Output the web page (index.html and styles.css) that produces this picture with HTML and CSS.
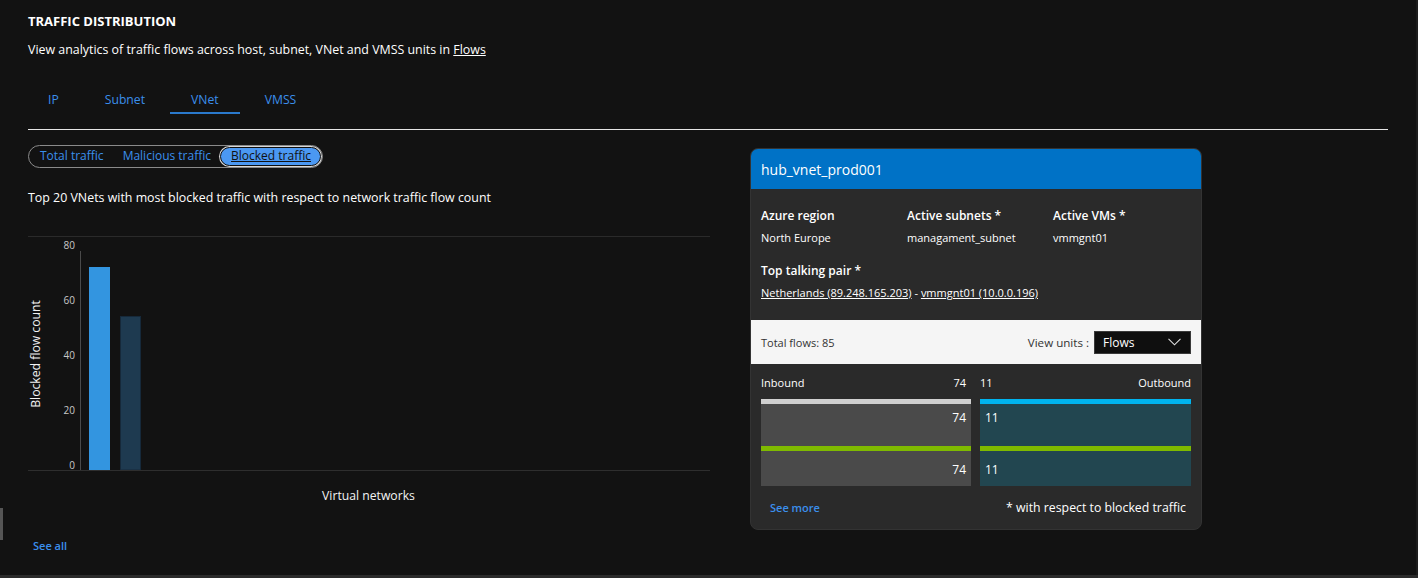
FILE: index.html
```html
<!DOCTYPE html>
<html lang="en">
<head>
<meta charset="utf-8">
<title>Traffic distribution</title>
<link rel="stylesheet" href="styles.css">
</head>
<body>
<div class="page">
  <h2 class="title">TRAFFIC DISTRIBUTION</h2>
  <p class="desc">View analytics of traffic flows across host, subnet, VNet and VMSS units in <a class="plain-link" href="#">Flows</a></p>
  <nav class="tabs">
    <span class="tab">IP</span>
    <span class="tab">Subnet</span>
    <span class="tab active">VNet</span>
    <span class="tab">VMSS</span>
  </nav>
  <div class="sep"></div>
  <div class="content">
    <section class="left">
      <div class="pills">
        <span class="pill">Total traffic</span>
        <span class="pill">Malicious traffic</span>
        <span class="pill selected">Blocked traffic</span>
      </div>
      <p class="chart-title">Top 20 VNets with most blocked traffic with respect to network traffic flow count</p>
      <svg class="chart" width="682" height="290" viewBox="0 0 682 290">
        <line x1="0" y1="10.5" x2="682" y2="10.5" stroke="#2a2a2a" stroke-width="1"/>
        <line x1="52.5" y1="25" x2="52.5" y2="244" stroke="#4a4a4a" stroke-width="1"/>
        <g class="ticks" text-anchor="end" dominant-baseline="central">
          <text x="47" y="18.5">80</text>
          <text x="47" y="73.5">60</text>
          <text x="47" y="128.5">40</text>
          <text x="47" y="183.5">20</text>
          <text x="47" y="238.5">0</text>
        </g>
        <rect x="61" y="41" width="21" height="203" fill="#3395e0"/>
        <rect x="92.5" y="90.5" width="20" height="153.5" fill="#1e3a50" stroke="#16293a" stroke-width="1"/>
        <line x1="0" y1="244.5" x2="682" y2="244.5" stroke="#2e2e2e" stroke-width="1"/>
        <text class="axis-title" transform="translate(7,128) rotate(-90)" text-anchor="middle" dominant-baseline="central">Blocked flow count</text>
        <text class="axis-title" x="340.5" y="269" text-anchor="middle" dominant-baseline="central">Virtual networks</text>
      </svg>
      <a class="see-all" href="#">See all</a>
    </section>
    <aside class="card">
      <header class="card-head">hub_vnet_prod001</header>
      <div class="card-info">
        <div class="info-grid">
          <div class="info-item"><div class="info-label">Azure region</div><div class="info-value">North Europe</div></div>
          <div class="info-item"><div class="info-label">Active subnets *</div><div class="info-value">managament_subnet</div></div>
          <div class="info-item"><div class="info-label">Active VMs *</div><div class="info-value">vmmgnt01</div></div>
        </div>
        <div class="info-label pair-label">Top talking pair *</div>
        <div class="info-value"><a class="plain-link" href="#">Netherlands (89.248.165.203)</a> - <a class="plain-link" href="#">vmmgnt01 (10.0.0.196)</a></div>
      </div>
      <div class="band">
        <span>Total flows: 85</span>
        <div class="units">
          <span>View units :</span>
          <div class="select">
            <span>Flows</span>
            <svg width="13" height="8" viewBox="0 0 13 8"><path d="M0.5 0.8 L6.5 6.8 L12.5 0.8" fill="none" stroke="#e0e0e0" stroke-width="1.1"/></svg>
          </div>
        </div>
      </div>
      <div class="flows">
        <div class="flow-col inbound">
          <div class="flow-head"><span>Inbound</span><span>74</span></div>
          <div class="stripe top"></div>
          <div class="block first">74</div>
          <div class="stripe green"></div>
          <div class="block second">74</div>
        </div>
        <div class="flow-col outbound">
          <div class="flow-head"><span>11</span><span>Outbound</span></div>
          <div class="stripe top"></div>
          <div class="block first">11</div>
          <div class="stripe green"></div>
          <div class="block second">11</div>
        </div>
      </div>
      <footer class="card-foot">
        <a class="see-more" href="#">See more</a>
        <span>* with respect to blocked traffic</span>
      </footer>
    </aside>
  </div>
</div>
<div class="scroll-thumb"></div>
<div class="bottom-bar"></div>
</body>
</html>
```

FILE: styles.css
```css
* { box-sizing: border-box; }

html, body {
  margin: 0;
  height: 578px;
  overflow: hidden;
}

body {
  background: #121212;
  color: #ffffff;
  font-family: "Open Sans", "Noto Sans", "Liberation Sans", sans-serif;
  font-size: 12px;
  position: relative;
}

.page {
  height: 575px;
  padding: 0 28px;
  border-right: 2px solid #1c1c1c;
}

.title {
  margin: 0;
  padding-top: 11px;
  font-size: 13px;
  font-weight: 700;
  line-height: 20px;
  letter-spacing: 0;
}

.desc {
  margin: 10px 0 0;
  font-size: 12.4px;
  line-height: 18px;
}

.plain-link {
  color: #ffffff;
  text-decoration: underline;
}

.tabs {
  display: flex;
  gap: 4px;
  margin-top: 32px;
}

.tab {
  padding: 0 21px;
  color: #3b8fec;
  font-size: 12.2px;
  line-height: 18px;
  height: 23px;
  border-bottom: 2px solid transparent;
}

.tab:first-child {
  padding-left: 20px;
}

.tab.active {
  border-bottom-color: #2a79cc;
}

.sep {
  margin-top: 15px;
  height: 1px;
  background: #e6e6e6;
}

.content {
  display: flex;
  align-items: flex-start;
  gap: 40px;
}

.left {
  width: 682px;
  flex: none;
}

.pills {
  margin-top: 15px;
  display: inline-flex;
  align-items: center;
  height: 23px;
  padding: 0 1px;
  border: 1px solid #8a8a8a;
  border-radius: 12px;
}

.pill {
  padding: 0 9px 0 10px;
  height: 19px;
  line-height: 18px;
  font-size: 12px;
  color: #3b8fec;
  border-radius: 10px;
}

.pill.selected {
  background: #4b98f2;
  color: #111111;
  text-decoration: underline;
  border: 1px solid #0e0e0e;
  box-shadow: 0 0 0 1px #d8d8d8;
  line-height: 16px;
}

.chart-title {
  margin: 21px 0 0;
  line-height: 18px;
  font-size: 12.4px;
}

.chart {
  display: block;
  margin-top: 19px;
}

.chart .ticks text {
  font-size: 10px;
  fill: #c8c8c8;
}

.chart .axis-title {
  font-size: 12.2px;
  fill: #f2f2f2;
}

.see-all {
  display: inline-block;
  margin: 22px 0 0 5px;
  color: #3b8fec;
  font-weight: 600;
  font-size: 11px;
  line-height: 16px;
  text-decoration: none;
}

.card {
  margin-top: 18px;
  width: 452px;
  flex: none;
  background: #2a2a2a;
  border: 1px solid #333333;
  border-radius: 8px;
  overflow: hidden;
}

.card-head {
  height: 40px;
  background: #0072c6;
  padding: 0 10px;
  display: flex;
  align-items: center;
  font-size: 14px;
}

.card-info {
  padding: 18px 10px 18px;
}

.info-grid {
  display: grid;
  grid-template-columns: 146px 146px 146px;
}

.info-label {
  font-weight: 600;
  font-size: 12px;
  line-height: 18px;
}

.info-value {
  margin-top: 4px;
  font-size: 11px;
  line-height: 18px;
}

.pair-label {
  margin-top: 15px;
}

.band {
  height: 44px;
  background: #f5f5f5;
  color: #333333;
  display: flex;
  align-items: center;
  justify-content: space-between;
  padding: 0 10px 0 10px;
  font-size: 11px;
}

.units {
  display: flex;
  align-items: center;
  gap: 5px;
}

.units > span {
  font-size: 11.6px;
}

.select {
  width: 97px;
  height: 23px;
  background: #0f0f0f;
  border: 1px solid #3a3a3a;
  color: #ffffff;
  font-size: 12px;
  display: flex;
  align-items: center;
  justify-content: space-between;
  padding: 0 9px 0 8px;
}

.flows {
  display: grid;
  grid-template-columns: 210px 211px;
  gap: 9px;
  padding: 10px 9px 0 10px;
}

.flow-head {
  display: flex;
  justify-content: space-between;
  font-size: 11px;
  line-height: 17px;
  margin-bottom: 8px;
}

.inbound .flow-head span:last-child { padding-right: 5px; }

.stripe {
  height: 5px;
}

.inbound .stripe.top { background: #d0d0d0; }
.outbound .stripe.top { background: #00b4ef; }
.stripe.green { background: #7fba00; }

.block {
  font-size: 12px;
  line-height: 16px;
  padding: 0 5px;
}

.block.first { height: 42px; padding-top: 6px; }
.block.second { height: 35px; padding-top: 11px; }

.inbound .block { background: #4a4a4a; text-align: right; }
.outbound .block { background: #224650; text-align: left; }

.card-foot {
  display: flex;
  justify-content: space-between;
  align-items: center;
  padding: 13px 15px 13px 19px;
  line-height: 17px;
  font-size: 12.3px;
}

.see-more {
  color: #3b8fec;
  font-weight: 600;
  font-size: 11px;
  text-decoration: none;
}

.scroll-thumb {
  position: absolute;
  left: 0;
  top: 508px;
  width: 3px;
  height: 32px;
  background: #555555;
}

.bottom-bar {
  height: 3px;
  background: #2b2b2b;
}
```
